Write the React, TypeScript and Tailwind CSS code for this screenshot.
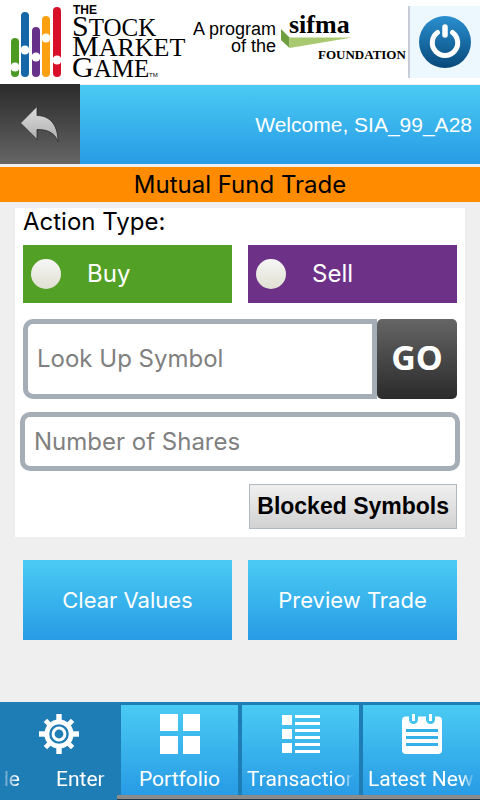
import { useState } from "react";

const wide = "font-[Inter,'Liberation_Sans',sans-serif]";
const blue = "bg-linear-to-b from-[#4acbf3] to-[#289be5]";

const bars = [
  { x: 11, top: 38, dot: 67, color: "#4c9a22" },
  { x: 21, top: 12, dot: 50, color: "#1567a8" },
  { x: 32, top: 27, dot: 57, color: "#65308a" },
  { x: 42, top: 16, dot: 38, color: "#fba010" },
  { x: 53, top: 7, dot: 60, color: "#d9102a" },
];

const StockMarketLogo = () => (
  <svg
    width="192"
    height="84"
    viewBox="0 0 192 84"
    role="img"
    aria-label="The Stock Market Game"
    className="shrink-0"
    fontFamily="'Liberation Serif', serif"
  >
    {bars.map((bar) => (
      <g key={bar.color}>
        <rect
          x={bar.x}
          y={bar.top}
          width="8"
          height={77 - bar.top}
          rx="4"
          fill={bar.color}
        />
        <circle cx={bar.x + 4} cy={bar.dot} r="4.5" fill="#fff" />
      </g>
    ))}
    <text
      x="73"
      y="14"
      fontSize="12"
      fontWeight="700"
      fontFamily="'Liberation Sans', sans-serif"
    >
      THE
    </text>
    <text x="72" y="36" fontSize="30">
      S<tspan fontSize="25">TOCK</tspan>
    </text>
    <text x="72" y="56" fontSize="30">
      M<tspan fontSize="26">ARKET</tspan>
    </text>
    <text x="72" y="77" fontSize="30">
      G<tspan fontSize="25">AME</tspan>
    </text>
    <text x="149" y="77" fontSize="6" fontFamily="'Liberation Sans', sans-serif">
      TM
    </text>
  </svg>
);

const SifmaLogo = () => (
  <svg
    width="128"
    height="84"
    viewBox="280 0 128 84"
    role="img"
    aria-label="sifma foundation"
    className="shrink-0"
    fontFamily="'Liberation Serif', serif"
    fontWeight="700"
  >
    <path d="M281 29 L289.500 37.500 V48 L281 40 Z" fill="#6f9e3f" />
    <path d="M289.500 37.500 H352 L289.500 48 Z" fill="#a9c971" />
    <text x="289" y="33" fontSize="26">
      sifma
    </text>
    <text x="318" y="59" fontSize="13">
      FOUNDATION
    </text>
  </svg>
);

const PowerIcon = () => (
  <svg width="54" height="54" viewBox="0 0 54 54" aria-hidden="true">
    <defs>
      <linearGradient id="power" x1="0" y1="0" x2="0" y2="1">
        <stop offset="0" stopColor="#2a8fcf" />
        <stop offset="1" stopColor="#07497a" />
      </linearGradient>
    </defs>
    <circle cx="27" cy="27" r="26" fill="url(#power)" />
    <g fill="none" stroke="#fff" strokeLinecap="round">
      <path d="M19.500 17.500 A12.700 12.700 0 1 0 34.500 17.500" strokeWidth="5" />
      <path d="M27 12 V20" strokeWidth="5.500" />
    </g>
  </svg>
);

const BackIcon = () => (
  <svg width="40" height="38" viewBox="0 0 40 38" aria-hidden="true">
    <defs>
      <linearGradient id="back" x1="0" y1="0" x2="0" y2="1">
        <stop offset="0" stopColor="#dedede" />
        <stop offset="1" stopColor="#adadad" />
      </linearGradient>
    </defs>
    <path
      d="M0.500 18 L17 1.500 V10.500 C29 10.500 38 19 38 36.500 C34 27 27 24.500 17 24.500 V34.500 Z"
      fill="url(#back)"
      stroke="#2b2b2b"
      strokeWidth="0.800"
    />
  </svg>
);

const GearIcon = () => (
  <svg width="40" height="40" viewBox="0 0 40 40" aria-hidden="true">
    <g fill="#fff">
      {[0, 90, 180, 270].map((a) => (
        <rect key={a} x="17.300" y="0" width="5.400" height="8" transform={`rotate(${a} 20 20)`} />
      ))}
      {[45, 135, 225, 315].map((a) => (
        <rect key={a} x="17.600" y="0.800" width="4.800" height="8" transform={`rotate(${a} 20 20)`} />
      ))}
    </g>
    <circle cx="20" cy="20" r="12.200" fill="none" stroke="#fff" strokeWidth="4.800" />
    <circle cx="20" cy="20" r="5.900" fill="none" stroke="#fff" strokeWidth="3" />
  </svg>
);

const GridIcon = () => (
  <svg width="40" height="40" viewBox="0 0 40 40" fill="#fff" aria-hidden="true">
    <path d="M0 0h18v17H0z M23 0h17v17H23z M0 22h18v18H0z M23 22h17v18H23z" />
  </svg>
);

const ListIcon = () => (
  <svg width="38" height="40" viewBox="0 0 38 40" fill="#fff" aria-hidden="true">
    {[1, 15, 29].map((y) => (
      <path key={y} d={`M0 ${y}h10v10h-10z M13 ${y}h25v3h-25z M13 ${y + 7}h25v3h-25z`} />
    ))}
  </svg>
);

const NotepadIcon = () => (
  <svg width="40" height="40" viewBox="0 0 40 40" aria-hidden="true">
    <path
      d="M4 2.500 H7 V5.500 A4.500 4.500 0 0 0 16 5.500 V2.500 H24 V5.500 A4.500 4.500 0 0 0 33 5.500 V2.500 H36 A4 4 0 0 1 40 6.500 V36 A4 4 0 0 1 36 40 H4 A4 4 0 0 1 0 36 V6.500 A4 4 0 0 1 4 2.500 Z"
      fill="#fff"
    />
    <path d="M11.500 0 V7 M28.500 0 V7" stroke="#fff" strokeWidth="3" />
    <path d="M4 16.500 H36 M4 23.500 H36 M4 30.500 H36" stroke="#35b1ea" strokeWidth="3" />
  </svg>
);

const tabs = [
  { label: "Portfolio", icon: <GridIcon />, fade: "justify-center" },
  {
    label: "Transactions",
    icon: <ListIcon />,
    fade: "mask-r-from-88% mask-r-to-100%",
  },
  {
    label: "Latest News",
    icon: <NotepadIcon />,
    fade: "mask-r-from-88% mask-r-to-100%",
  },
];

const App = () => {
  const [action, setAction] = useState("");
  const [symbol, setSymbol] = useState("");
  const [shares, setShares] = useState("");

  const clearValues = () => {
    setAction("");
    setSymbol("");
    setShares("");
  };

  const radio =
    "size-[30px] shrink-0 appearance-none rounded-full bg-linear-to-b from-[#f6f6f6] to-[#e0e0d2] checked:border-8 checked:border-white checked:bg-gray-700";

  return (
    <div className={`flex min-h-screen flex-col bg-[#efefef] text-black ${wide}`}>
      <header className="flex h-[84px] items-center bg-white">
        <StockMarketLogo />
        <p className="mr-1 mb-2 ml-auto shrink-0 text-right font-['Liberation_Sans',sans-serif] text-[18px] leading-[17px]">
          A program
          <br />
          of the
        </p>
        <SifmaLogo />
        <button
          type="button"
          aria-label="Log out"
          className="flex h-[72px] w-[72px] shrink-0 items-center justify-center border-l-2 border-[#c9cdd9] bg-[#edf7fe]"
        >
          <PowerIcon />
        </button>
      </header>

      <div className="flex h-20">
        <button
          type="button"
          aria-label="Back"
          className="flex w-20 items-center justify-center bg-linear-to-b from-[#2b2b2b] to-[#666]"
        >
          <BackIcon />
        </button>
        <div className={`flex flex-1 items-center justify-end border-t border-[#efefef] px-2 ${blue}`}>
          <span className="font-['Liberation_Sans',sans-serif] text-[21px] text-white">
            Welcome, SIA_99_A28
          </span>
        </div>
      </div>

      <h1 className="mt-[3px] bg-[#ff8c00] text-center text-[24px] leading-[35px]">
        Mutual Fund Trade
      </h1>

      <main>
        <section className="mx-[15px] mt-1.5 bg-white px-2 pb-2">
          <fieldset>
            <legend className="text-[24px] leading-7">Action Type:</legend>
            <div className="mt-[9px] grid grid-cols-2 gap-4 text-[24px] text-white">
              <label className="flex h-[58px] items-center gap-[26px] bg-[#52a025] px-2">
                <input
                  type="radio"
                  name="action"
                  className={radio}
                  checked={action === "buy"}
                  onChange={() => setAction("buy")}
                />
                Buy
              </label>
              <label className="flex h-[58px] items-center gap-[26px] bg-[#6d3188] px-2">
                <input
                  type="radio"
                  name="action"
                  className={radio}
                  checked={action === "sell"}
                  onChange={() => setAction("sell")}
                />
                Sell
              </label>
            </div>
          </fieldset>

          <div className="mt-4 flex h-20">
            <input
              type="text"
              aria-label="Look Up Symbol"
              placeholder="Look Up Symbol"
              value={symbol}
              onChange={(e) => setSymbol(e.target.value)}
              className="min-w-0 flex-1 rounded-l-[10px] border-5 border-[#a5adb6] bg-white px-[9px] text-[24px] placeholder:text-[#808080]"
            />
            <button
              type="button"
              className="w-20 rounded-[5px] bg-linear-to-b from-[#666] to-[#2b2b2b] pb-1 font-['Open_Sans',sans-serif] text-[34px] font-bold text-white"
            >
              GO
            </button>
          </div>

          <div className="-mx-[3px] mt-[13px] flex h-[59px]">
            <input
              type="text"
              aria-label="Number of Shares"
              placeholder="Number of Shares"
              value={shares}
              onChange={(e) => setShares(e.target.value)}
              className="min-w-0 flex-1 rounded-[10px] border-5 border-[#a5adb6] bg-white px-[9px] text-[24px] placeholder:text-[#808080]"
            />
          </div>

          <div className="mt-[13px] flex justify-end">
            <button
              type="button"
              className="h-[45px] border border-[#b1b8c0] bg-linear-to-b from-[#f0f0f0] to-[#d2d2d2] px-[7px] font-['Liberation_Sans',sans-serif] text-[23px] font-bold"
            >
              Blocked Symbols
            </button>
          </div>
        </section>

        <div className="mx-[23px] mt-[23px] grid grid-cols-2 gap-4 text-[22px] text-white">
          <button type="button" onClick={clearValues} className={`h-20 ${blue}`}>
            Clear Values
          </button>
          <button type="button" className={`h-20 ${blue}`}>
            Preview Trade
          </button>
        </div>
      </main>

      <nav className="mt-auto grid h-[98px] grid-cols-4 gap-1 bg-[#1f7db6] font-[Roboto,sans-serif] text-[21px] leading-6 text-white">
        <a href="#trade" aria-current="page" className="flex min-w-0 flex-col items-center pt-3">
          <GearIcon />
          <span className="mt-[13px] flex w-full gap-9 overflow-hidden mask-x-from-85% mask-x-to-100% pl-[5px] whitespace-nowrap">
            <span className="flex w-[15px] shrink-0 justify-end overflow-hidden" aria-hidden="true">
              Enter Trade
            </span>
            <span className="w-[52px] shrink-0 overflow-hidden">Enter Trade</span>
          </span>
        </a>
        {tabs.map((tab) => (
          <div key={tab.label} className="flex min-w-0 flex-col">
            <a
              href={`#${tab.label}`}
              className={`mt-[3px] flex min-h-0 flex-1 flex-col items-center px-[5px] pt-[9px] ${blue}`}
            >
              {tab.icon}
              <span className={`mt-[13px] flex w-full overflow-hidden whitespace-nowrap ${tab.fade}`}>
                {tab.label}
              </span>
            </a>
            <span className="-ml-1 h-[5px] border-b border-[#243746] bg-[#8b8b8b]" />
          </div>
        ))}
      </nav>
    </div>
  );
};

export default App;
